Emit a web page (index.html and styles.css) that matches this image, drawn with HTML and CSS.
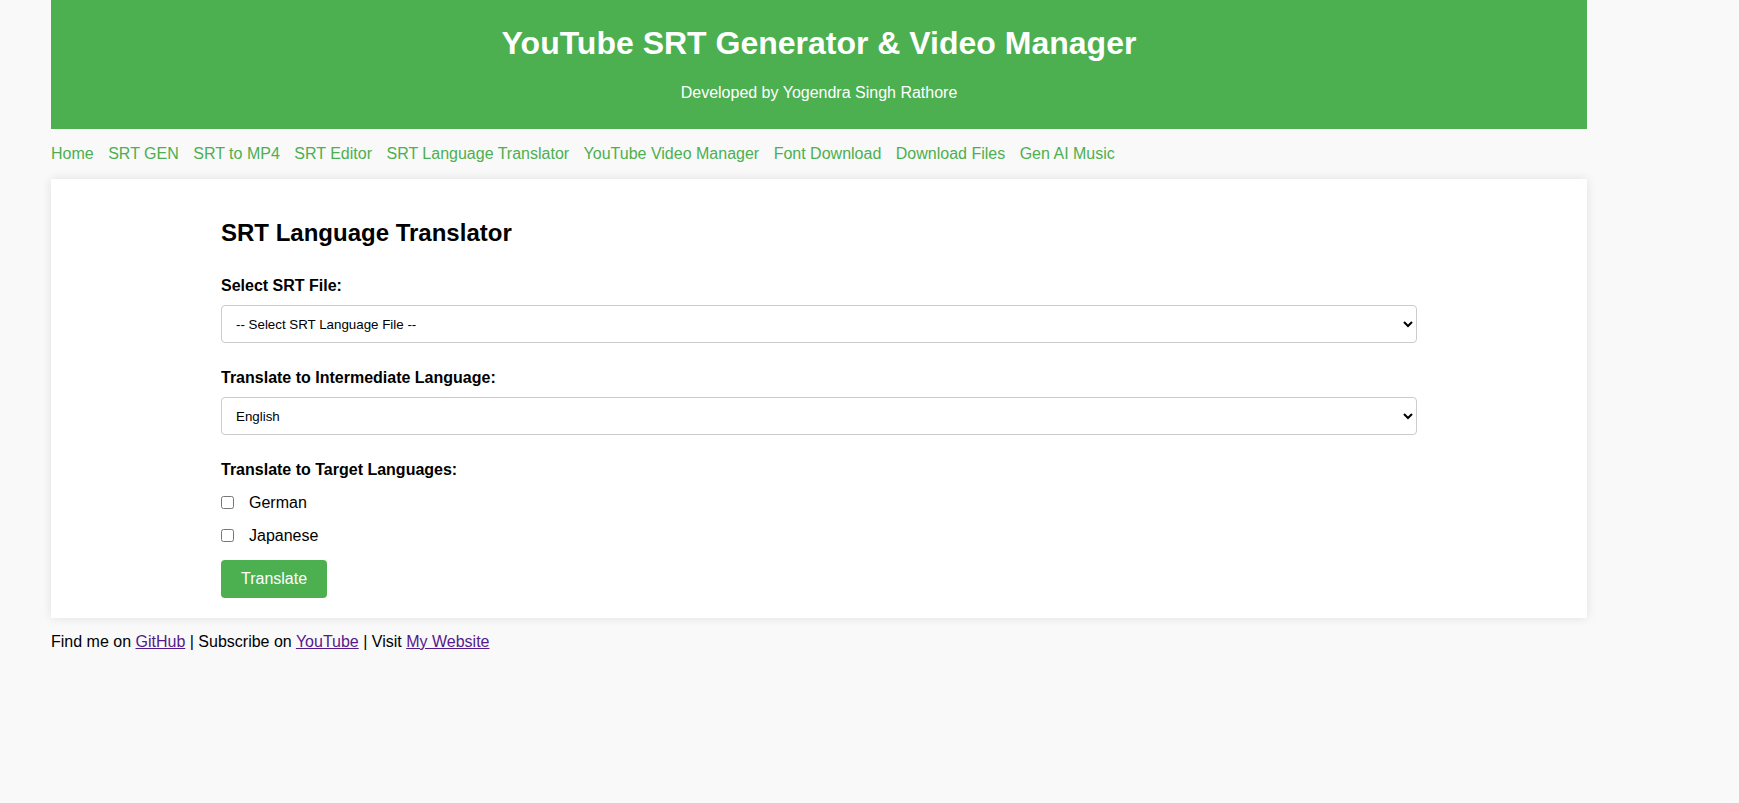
FILE: index.html
```html
<!DOCTYPE html>
<html lang="en">
<head>
<meta charset="utf-8">
<title>SRT Language Translator</title>
<link rel="stylesheet" href="styles.css">
</head>
<body>
<div class="page">
  <header class="site-header">
    <h1 class="site-title">YouTube SRT Generator &amp; Video Manager</h1>
    <p class="site-sub">Developed by Yogendra Singh Rathore</p>
  </header>
  <nav class="site-nav">
    <a href="#">Home</a>
    <a href="#">SRT GEN</a>
    <a href="#">SRT to MP4</a>
    <a href="#">SRT Editor</a>
    <a href="#">SRT Language Translator</a>
    <a href="#">YouTube Video Manager</a>
    <a href="#">Font Download</a>
    <a href="#">Download Files</a>
    <a href="#">Gen AI Music</a>
  </nav>
  <main class="card">
    <form class="form">
      <h2 class="form-title">SRT Language Translator</h2>
      <label class="field-label" for="srt">Select SRT File:</label>
      <select id="srt" class="field-select">
        <option>-- Select SRT Language File --</option>
      </select>
      <label class="field-label" for="mid">Translate to Intermediate Language:</label>
      <select id="mid" class="field-select">
        <option>English</option>
      </select>
      <span class="field-label">Translate to Target Languages:</span>
      <div class="checks">
        <label class="check"><input type="checkbox"><span>German</span></label>
        <label class="check"><input type="checkbox"><span>Japanese</span></label>
      </div>
      <div><button type="button" class="btn">Translate</button></div>
    </form>
  </main>
  <footer class="site-footer">
    Find me on <a href="#" class="visited">GitHub</a> | Subscribe on <a href="#" class="visited">YouTube</a> | Visit <a href="#" class="visited">My Website</a>
  </footer>
</div>
</body>
</html>
```
FILE: styles.css
```css
html, body {
  margin: 0;
  padding: 0;
}
body {
  background: #f9f9f9;
  font-family: "Liberation Sans", Arial, sans-serif;
  font-size: 16px;
  color: #000;
}
.page {
  width: 1536px;
  margin-left: 51px;
}
.site-header {
  background: #4caf50;
  color: #fff;
  text-align: center;
  padding: 25px 0 27px;
}
.site-title {
  margin: 0 0 22px;
  font-size: 32px;
  font-weight: bold;
}
.site-sub {
  margin: 0;
  font-size: 16px;
}
.site-nav {
  display: flex;
  padding: 16px 0 16px;
}
.site-nav a {
  color: #4caf50;
  text-decoration: none;
  margin-right: 14.5px;
}
.card {
  display: block;
  background: #fff;
  padding: 20px;
  box-shadow: 0 0 10px rgba(0, 0, 0, 0.1);
}
.form {
  width: 1196px;
  margin: 0 auto;
  display: flex;
  flex-direction: column;
}
.form-title {
  font-size: 24px;
  font-weight: bold;
  margin: 20px 0 30px;
}
.field-label {
  display: block;
  font-weight: bold;
  margin-bottom: 10px;
}
.field-select {
  display: block;
  width: 100%;
  height: 38px;
  padding: 10px;
  border: 1px solid #ccc;
  border-radius: 4px;
  background: #fff;
  font-family: "Liberation Sans", Arial, sans-serif;
  font-size: 13.33px;
  color: #000;
  margin-bottom: 26px;
}
.checks {
  display: flex;
  flex-direction: column;
  gap: 15px;
  margin-top: 5px;
  margin-bottom: 15px;
}
.check {
  display: flex;
  align-items: flex-start;
  height: 18px;
}
.check input {
  width: 13px;
  height: 13px;
  margin: 2px 15px 0 0;
}
.btn {
  background: #4caf50;
  color: #fff;
  border: none;
  border-radius: 4px;
  padding: 10px 20px;
  height: 38px;
  font-family: "Liberation Sans", Arial, sans-serif;
  font-size: 16px;
}
.site-footer {
  padding-top: 15px;
}
.site-footer a {
  color: #551a8b;
}
```
